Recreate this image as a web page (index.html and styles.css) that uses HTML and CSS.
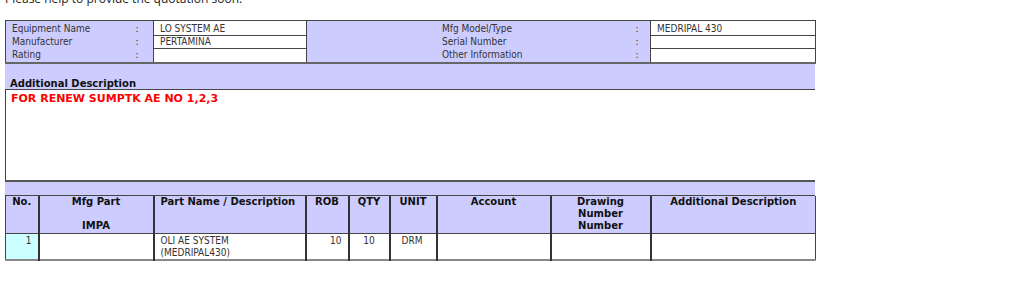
FILE: index.html
```html
<!DOCTYPE html>
<html>
<head>
<meta charset="utf-8">
<link rel="stylesheet" href="styles.css">
</head>
<body>
<p class="intro">Please help to provide the quotation soon.</p>
<div class="sheet">
  <table class="info">
    <colgroup>
      <col class="i-lbl"><col class="i-col"><col class="i-val"><col class="i-lbl2"><col class="i-col2"><col class="i-val2">
    </colgroup>
    <tr class="r1">
      <td class="lbl">Equipment Name</td><td class="col">:</td><td class="val">LO SYSTEM AE</td>
      <td class="lbl2">Mfg Model/Type</td><td class="col2">:</td><td class="val">MEDRIPAL 430</td>
    </tr>
    <tr class="r2">
      <td class="lbl">Manufacturer</td><td class="col">:</td><td class="val">PERTAMINA</td>
      <td class="lbl2">Serial Number</td><td class="col2">:</td><td class="val"></td>
    </tr>
    <tr class="r3">
      <td class="lbl">Rating</td><td class="col">:</td><td class="val"></td>
      <td class="lbl2">Other Information</td><td class="col2">:</td><td class="val"></td>
    </tr>
  </table>
  <div class="addhead">Additional Description</div>
  <div class="addbody">FOR RENEW SUMPTK AE NO 1,2,3</div>
  <div class="band"></div>
  <table class="parts">
    <colgroup>
      <col class="c-no"><col class="c-mfg"><col class="c-name"><col class="c-rob"><col class="c-qty"><col class="c-unit"><col class="c-acc"><col class="c-drw"><col class="c-add">
    </colgroup>
    <tr class="head">
      <th>No.</th>
      <th>Mfg Part<br><br>IMPA</th>
      <th>Part Name / Description</th>
      <th>ROB</th>
      <th>QTY</th>
      <th>UNIT</th>
      <th>Account</th>
      <th>Drawing<br>Number<br>Number</th>
      <th>Additional Description</th>
    </tr>
    <tr class="row">
      <td class="no">1</td>
      <td></td>
      <td>OLI AE SYSTEM<br>(MEDRIPAL430)</td>
      <td class="right">10</td>
      <td class="center">10</td>
      <td class="left">DRM</td>
      <td></td>
      <td></td>
      <td></td>
    </tr>
  </table>
</div>
</body>
</html>
```
FILE: styles.css
```css
html, body {
  margin: 0;
  padding: 0;
  background: #ffffff;
}
body {
  font-family: "DejaVu Sans Condensed", "DejaVu Sans", Verdana, sans-serif;
  font-size: 10px;
  color: #333;
}
.intro {
  font-family: "Open Sans", sans-serif;
  font-size: 12px;
  color: #222;
  margin: -10px 0 0 5px;
  line-height: 18px;
  height: 12px;
}
.sheet {
  margin: 18px 0 0 5px;
  width: 810px;
}
.info {
  width: 810px;
  border-collapse: collapse;
  table-layout: fixed;
  background: #ccccff;
  border: 1px solid #444;
  border-bottom: 2px solid #666;
}
.i-lbl { width: 125px; }
.i-col { width: 23px; }
.i-val { width: 153px; }
.i-lbl2 { width: 319px; }
.i-col2 { width: 25px; }
.i-val2 { width: 165px; }
.info td {
  padding: 0 0 0 6px;
  line-height: 12px;
  vertical-align: middle;
  white-space: nowrap;
}
.info .r1 td { height: 13px; padding-top: 1px; }
.info .r2 td { height: 11px; }
.info .r3 td { height: 13px; }
.info .col { padding-left: 5px; }
.info .lbl2 { padding-left: 135px; }
.info .col2 { padding-left: 10px; }
.info .val {
  background: #fff;
  border: 1px solid #444;
}
.addhead {
  background: #ccccff;
  height: 26px;
  box-sizing: border-box;
  padding: 14px 0 0 5px;
  font-family: "DejaVu Sans", Verdana, sans-serif;
  font-weight: bold;
  line-height: 12px;
  color: #111;
  border-bottom: 1px solid #444;
}
.addbody {
  height: 92px;
  box-sizing: border-box;
  border-left: 1px solid #444;
  border-bottom: 2px solid #555;
  padding: 2px 0 0 5px;
  color: #ff0000;
  font-family: "DejaVu Sans", Verdana, sans-serif;
  font-weight: bold;
  font-size: 11px;
  line-height: 13px;
}
.band {
  background: #ccccff;
  height: 13px;
  border-bottom: 1px solid #444;
}
.parts {
  width: 810px;
  border-collapse: collapse;
  table-layout: fixed;
  border-left: 1px solid #444;
  border-bottom: 2px solid #888;
}
.c-no { width: 33px; }
.c-mfg { width: 115px; }
.c-name { width: 152px; }
.c-rob { width: 43px; }
.c-qty { width: 41px; }
.c-unit { width: 47px; }
.c-acc { width: 114px; }
.c-drw { width: 100px; }
.c-add { width: 165px; }
.parts th {
  background: #ccccff;
  font-family: "DejaVu Sans", Verdana, sans-serif;
  font-weight: bold;
  color: #111;
  text-align: center;
  vertical-align: top;
  border-right: 2px solid #333;
  border-bottom: 1px solid #444;
  padding: 0 2px 1px;
  line-height: 12px;
  height: 36px;
}
.parts th:nth-child(3) { text-align: left; padding-left: 6px; }
.parts td {
  vertical-align: top;
  border-right: 2px solid #333;
  padding: 1px 6px 0;
  line-height: 12px;
  height: 20px;
}
.parts th:last-child, .parts td:last-child { border-right: 1px solid #444; }
.parts td.no { background: #ccffff; text-align: right; }
.parts td.right { text-align: right; }
.parts td.center { text-align: center; }
.parts td.left { text-align: left; padding-left: 11px; }
```
